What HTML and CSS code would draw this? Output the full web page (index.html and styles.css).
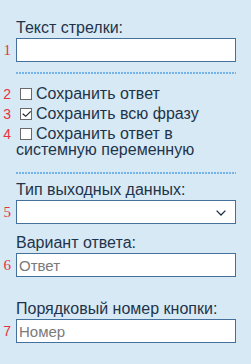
FILE: index.html
```html
<!DOCTYPE html>
<html lang="ru">
<head>
    <meta charset="UTF-8">
    <meta name="viewport" content="width=device-width, initial-scale=1.0">
    <title>Настройки стрелки</title>
    <link rel="stylesheet" href="styles.css">
</head>
<body>
    <div class="panel">
        <div class="field field-first">
            <label class="label" for="arrowText">Текст стрелки:</label>
            <div class="row">
                <span class="num serif">1</span>
                <input class="input" type="text" id="arrowText">
            </div>
        </div>

        <div class="divider"></div>

        <div class="checks">
            <div class="check">
                <span class="num">2</span>
                <span class="check-text"><span class="box"></span>Сохранить ответ</span>
            </div>
            <div class="check">
                <span class="num">3</span>
                <span class="check-text"><span class="box"><svg width="11" height="11" viewBox="0 0 11 11"><polyline points="1.7,4.7 4.7,7.3 9.7,2.3" fill="none" stroke="#222" stroke-width="1.2"/></svg></span>Сохранить всю фразу</span>
            </div>
            <div class="check">
                <span class="num">4</span>
                <span class="check-text"><span class="box"></span>Сохранить ответ в системную переменную</span>
            </div>
        </div>

        <div class="divider divider-second"></div>

        <div class="field field-type">
            <label class="label">Тип выходных данных:</label>
            <div class="row">
                <span class="num serif">5</span>
                <div class="input select">
                    <svg width="10" height="6" viewBox="0 0 10 6"><polyline points="0.6,0.6 5,5 9.4,0.6" fill="none" stroke="#1b2d45" stroke-width="1.3"/></svg>
                </div>
            </div>
        </div>

        <div class="field field-answer">
            <label class="label" for="answer">Вариант ответа:</label>
            <div class="row">
                <span class="num serif">6</span>
                <input class="input" type="text" id="answer" placeholder="Ответ">
            </div>
        </div>

        <div class="field field-button">
            <label class="label" for="buttonNum">Порядковый номер кнопки:</label>
            <div class="row">
                <span class="num">7</span>
                <input class="input" type="text" id="buttonNum" placeholder="Номер">
            </div>
        </div>
    </div>
</body>
</html>
```

FILE: styles.css
```css
body {
    margin: 0;
    background-color: #d6e9f5;
    font-family: "Liberation Sans", Arial, sans-serif;
    color: #1f344a;
}

.panel {
    padding-top: 19px;
    width: 251px;
}

.label {
    display: block;
    margin-left: 16px;
    font-size: 16px;
    line-height: 18px;
    margin-bottom: 1px;
}

.row {
    display: flex;
    align-items: center;
}

.num {
    width: 16px;
    padding-right: 5px;
    box-sizing: border-box;
    text-align: right;
    color: #e8333d;
    font-family: "Liberation Sans", Arial, sans-serif;
    font-size: 14px;
    flex-shrink: 0;
}

.num.serif {
    font-family: "Liberation Serif", "Times New Roman", serif;
    font-size: 15px;
}

.input {
    width: 220px;
    height: 24px;
    box-sizing: border-box;
    border: 1px solid #44719b;
    background: #ffffff;
    margin: 0;
    padding: 0 2px;
    font-family: "Liberation Sans", Arial, sans-serif;
    font-size: 15px;
    color: #222;
    outline: none;
}

.input::placeholder {
    color: #7a7a7a;
}

.select {
    display: flex;
    align-items: center;
    justify-content: flex-end;
    padding-right: 9px;
}

.select svg {
    display: block;
    margin-top: 1px;
}

.divider {
    margin: 10px 0 0 16px;
    width: 220px;
    height: 2px;
    background: repeating-linear-gradient(to right, #74b3e8 0 2px, transparent 2px 3px);
}

.checks {
    margin-top: 12px;
    display: flex;
    flex-direction: column;
    gap: 4px;
}

.check {
    display: flex;
    align-items: baseline;
}

.check-text {
    width: 220px;
    font-size: 16px;
    line-height: 16px;
}

.box {
    display: inline-block;
    width: 12px;
    height: 12px;
    box-sizing: border-box;
    border: 1px solid #6a6a6a;
    background: #ffffff;
    margin: 0 4px 0 4px;
    vertical-align: -1px;
    position: relative;
}

.box svg {
    display: block;
    position: absolute;
    left: -0.5px;
    top: 0;
}

.divider-second {
    margin-top: 14px;
}

.field-type {
    margin-top: 7px;
}

.field-answer {
    margin-top: 10px;
}

.field-button {
    margin-top: 23px;
}
```
